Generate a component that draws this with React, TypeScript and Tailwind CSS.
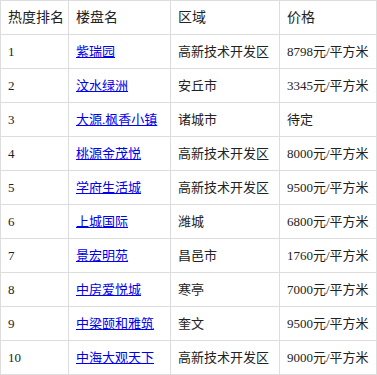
import React from "react";

const rows: [string, string, string, string][] = [
  ["1", "紫瑞园", "高新技术开发区", "8798元/平方米"],
  ["2", "汶水绿洲", "安丘市", "3345元/平方米"],
  ["3", "大源.枫香小镇", "诸城市", "待定"],
  ["4", "桃源金茂悦", "高新技术开发区", "8000元/平方米"],
  ["5", "学府生活城", "高新技术开发区", "9500元/平方米"],
  ["6", "上城国际", "潍城", "6800元/平方米"],
  ["7", "景宏明苑", "昌邑市", "1760元/平方米"],
  ["8", "中房爱悦城", "寒亭", "7000元/平方米"],
  ["9", "中梁颐和雅筑", "奎文", "9500元/平方米"],
  ["10", "中海大观天下", "高新技术开发区", "9000元/平方米"],
];

const cell = "border border-[#dddddd] px-[7px] h-[34px] align-middle whitespace-nowrap overflow-hidden";

export default function App() {
  return (
    <div
      className="bg-white text-[13px] text-[#222]"
      style={{ fontFamily: '"Liberation Serif", "Noto Sans CJK SC", serif' }}
    >
      <table className="border-collapse table-fixed w-[376px]">
        <colgroup>
          <col className="w-[68px]" />
          <col className="w-[102px]" />
          <col className="w-[109px]" />
          <col className="w-[97px]" />
        </colgroup>
        <thead>
          <tr>
            <th className={cell + " text-left font-normal text-[14px]"}>热度排名</th>
            <th className={cell + " text-left font-normal text-[14px]"}>楼盘名</th>
            <th className={cell + " text-left font-normal text-[14px]"}>区域</th>
            <th className={cell + " text-left font-normal text-[14px]"}>价格</th>
          </tr>
        </thead>
        <tbody>
          {rows.map((r) => (
            <tr key={r[0]}>
              <td className={cell}>{r[0]}</td>
              <td className={cell}>
                <a href="#" className="text-[#0000ee] underline">
                  {r[1]}
                </a>
              </td>
              <td className={cell}>{r[2]}</td>
              <td className={cell}>{r[3]}</td>
            </tr>
          ))}
        </tbody>
      </table>
    </div>
  );
}
